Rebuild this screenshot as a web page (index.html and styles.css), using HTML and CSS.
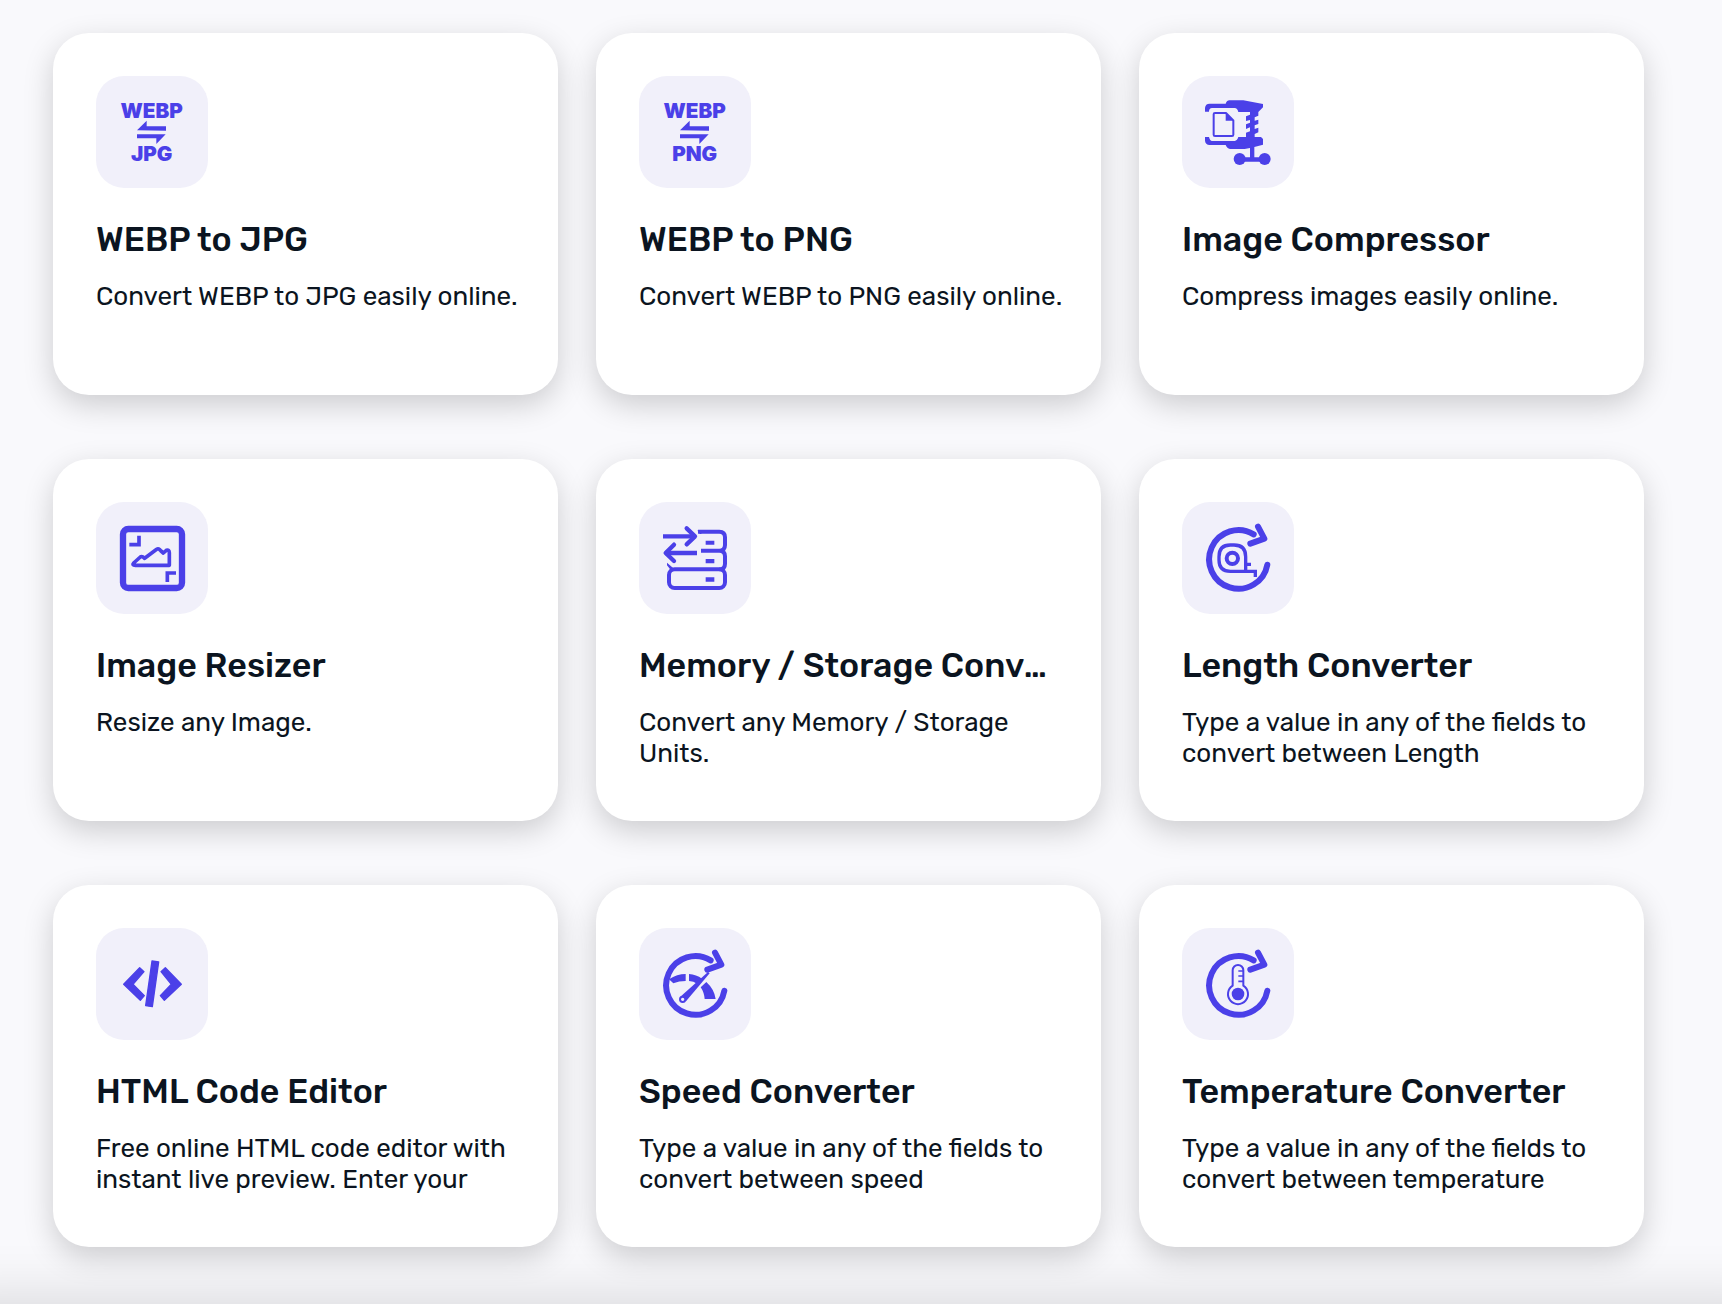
FILE: index.html
```html
<!DOCTYPE html>
<html lang="en">
<head>
    <meta charset="UTF-8">
    <meta name="viewport" content="width=device-width, initial-scale=1">
    <title>Online Tools</title>
    <link rel="stylesheet" href="styles.css">
</head>
<body>
    <!-- Shared icon parts -->
    <svg class="sprite" aria-hidden="true">
        <symbol id="swap" viewBox="18 18 336 336">
            <path d="M141 181 170 152V169H228V182ZM141 193H227L199 222V205H141Z"/>
        </symbol>
        <symbol id="ring" viewBox="18 18 336 336">
            <path class="line" stroke-width="18" d="M233 115A88 88 0 1 0 274 206"/>
            <path class="line" stroke-width="18" d="M246 92 265 128 223 143"/>
        </symbol>
    </svg>

    <main class="tools">
        <article class="card">
            <div class="icon">
                <svg viewBox="18 18 336 336">
                    <text x="185" y="144">WEBP</text>
                    <use href="#swap" x="18" y="18" width="336" height="336"/>
                    <text x="185" y="273">JPG</text>
                </svg>
            </div>
            <h2>WEBP to JPG</h2>
            <p>Convert WEBP to JPG easily online.</p>
        </article>

        <article class="card">
            <div class="icon">
                <svg viewBox="18 18 336 336">
                    <text x="185" y="144">WEBP</text>
                    <use href="#swap" x="18" y="18" width="336" height="336"/>
                    <text x="185" y="273">PNG</text>
                </svg>
            </div>
            <h2>WEBP to PNG</h2>
            <p>Convert WEBP to PNG easily online.</p>
        </article>

        <article class="card">
            <div class="icon">
                <svg viewBox="18 18 336 336">
                    <path d="M87 125V114Q88 101 101 101H149Q153 91 160 91H202L261 102V112L247 126V137L236 142V152L247 149V162L236 166V177L247 173V187L236 192V201H255L261 207V224L235 231V262H266V275H190V262H222V234L206 237H162Q153 236 149 225H101Q88 224 87 212V201H99Q102 213 108 213H176Q184 212 187 201H210V188L222 184V172L210 177V163L222 158V150L210 153V139L222 134V126H187Q184 114 176 114H108Q99 114 99 125Z"/>
                    <circle cx="191" cy="267" r="18"/>
                    <circle cx="266" cy="267" r="18"/>
                    <path class="line" stroke-width="6" d="M113 133Q113 129 117 129H150L172 151V194Q172 198 168 198H117Q113 198 113 194Z"/>
                    <path d="M149 129 173 152H149Z"/>
                </svg>
            </div>
            <h2>Image Compressor</h2>
            <p>Compress images easily online.</p>
        </article>

        <article class="card">
            <div class="icon">
                <svg viewBox="18 18 336 336">
                    <rect class="line" stroke-width="19" x="99" y="99" width="177" height="177" rx="16"/>
                    <path class="line square" stroke-width="11" d="M147 119V146H118M232 258V231H258"/>
                    <path class="line" stroke-width="11" d="M131 201 151 183Q156 179 164 187L200 160Q206 155 213 165L220 171 229 163Q238 160 238 170V208H136Q125 208 131 201Z"/>
                </svg>
            </div>
            <h2>Image Resizer</h2>
            <p>Resize any Image.</p>
        </article>

        <article class="card">
            <div class="icon">
                <svg viewBox="15 18 336 336">
                    <path class="line square" stroke-width="13" d="M87 121H184M189 171H94"/>
                    <path class="line" stroke-width="13" d="M158 97 183 121 158 145M120 146 95 171 120 195"/>
                    <path class="line square" stroke-width="12" d="M192 107H256Q273 107 273 124V147Q273 164 256 164H201M256 164Q273 164 273 181V203Q273 220 256 220"/>
                    <rect class="line" stroke-width="12" x="105" y="220" width="168" height="56" rx="17"/>
                    <path d="M189 102 204 114H198ZM99 200 120 218 110 222 99 208Z"/>
                    <path d="M215 134H241V146H215ZM215 189H241V202H215ZM215 244H241V257H215Z"/>
                </svg>
            </div>
            <h2>Memory / Storage Converter</h2>
            <p>Convert any Memory / Storage Units.</p>
        </article>

        <article class="card">
            <div class="icon">
                <svg viewBox="18 18 336 336">
                    <use href="#ring" x="18" y="18" width="336" height="336"/>
                    <path class="line square" stroke-width="10" d="M209 225V182Q209 147 174 147H163Q129 147 129 182V192Q129 226 163 226H238V243M210 205H225"/>
                    <circle class="line" stroke-width="12" cx="169" cy="187" r="17"/>
                </svg>
            </div>
            <h2>Length Converter</h2>
            <p>Type a value in any of the fields to convert between Length</p>
        </article>

        <article class="card">
            <div class="icon">
                <svg viewBox="18 18 336 336">
                    <path class="round" d="M149 137 162 149 129 187 163 221 151 235 101 187ZM226 137 213 149 244 187 211 221 223 235 274 187Z"/>
                    <path class="round" d="M186 117 206 120 187 254 167 251Z"/>
                </svg>
            </div>
            <h2>HTML Code Editor</h2>
            <p>Free online HTML code editor with instant live preview. Enter your</p>
        </article>

        <article class="card">
            <div class="icon">
                <svg viewBox="18 18 336 336">
                    <use href="#ring" x="18" y="18" width="336" height="336"/>
                    <path d="M108 172Q132 156 158 156V177Q138 177 121 184ZM168 156Q190 158 207 170L193 186Q182 177 168 177ZM203 196 220 180Q244 202 248 231H215Q213 210 203 196Z"/>
                    <path d="M225 150 230 154 159 238 142 224Z"/>
                    <circle class="dial" cx="149" cy="232" r="8"/>
                </svg>
            </div>
            <h2>Speed Converter</h2>
            <p>Type a value in any of the fields to convert between speed</p>
        </article>

        <article class="card">
            <div class="icon">
                <svg viewBox="18 18 336 336">
                    <use href="#ring" x="18" y="18" width="336" height="336"/>
                    <path class="line" stroke-width="6" d="M170 191V145A16 16 0 0 1 202 145V191A30 30 0 1 1 170 191Z"/>
                    <circle cx="186" cy="216" r="19"/>
                    <path class="line square" stroke-width="5" d="M187 147H201M187 162H201M187 178H201"/>
                </svg>
            </div>
            <h2>Temperature Converter</h2>
            <p>Type a value in any of the fields to convert between temperature</p>
        </article>
    </main>

    <div class="bottom-bar"></div>
</body>
</html>
```

FILE: styles.css
```css
* {
    margin: 0;
    padding: 0;
    box-sizing: border-box;
}

body {
    background: #f9f9fc;
    color: #0b1420;
    font-family: Rubik, Inter, sans-serif;
}

.sprite {
    display: none;
}

/* Card grid */
.tools {
    display: grid;
    grid-template-columns: repeat(3, minmax(0, 1fr));
    gap: 64px 38px;
    padding: 33px 78px 57px 53px;
}

.card {
    padding: 43px 43px 52px;
    background: #fff;
    border-radius: 36px;
    box-shadow: 0 10px 30px rgba(0, 0, 0, 0.18);
}

.card h2 {
    margin-top: 32px;
    font-size: 34px;
    font-weight: 500;
    line-height: 40px;
    white-space: nowrap;
    overflow: hidden;
    text-overflow: ellipsis;
}

.card p {
    min-height: 62px;
    margin-top: 21px;
    margin-right: -10px;
    font-size: 26px;
    line-height: 31px;
}

/* Icons */
.icon {
    width: 112px;
    height: 112px;
    background: #f1f0fa;
    border-radius: 28px;
}

.icon svg {
    display: block;
    width: 100%;
    height: 100%;
    fill: #4b40e8;
}

.icon text {
    font-family: Inter, sans-serif;
    font-size: 62px;
    font-weight: 900;
    text-anchor: middle;
}

.line {
    fill: none;
    stroke: #4b40e8;
    stroke-linecap: round;
    stroke-linejoin: round;
}

.square {
    stroke-linecap: butt;
    stroke-linejoin: miter;
}

.round {
    stroke: #4b40e8;
    stroke-width: 4;
    stroke-linejoin: round;
}

.dial {
    fill: #f1f0fa;
    stroke: #4b40e8;
    stroke-width: 6;
}

/* Sits just under the window, only its shadow shows */
.bottom-bar {
    position: fixed;
    top: 100%;
    left: -60px;
    right: -60px;
    height: 80px;
    box-shadow: 0 0 60px 4px rgba(0, 0, 0, 0.14);
}

@media (max-width: 1100px) {
    .tools {
        grid-template-columns: repeat(2, minmax(0, 1fr));
    }
}
```
